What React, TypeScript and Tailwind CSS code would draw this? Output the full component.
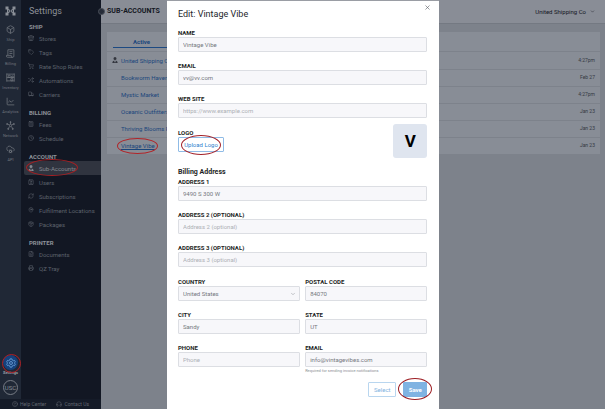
import type { ReactNode } from "react";
import {
  LuBox,
  LuCalculator,
  LuChartLine,
  LuChevronDown,
  LuCircleHelp,
  LuClock,
  LuCloudCog,
  LuContact,
  LuFileText,
  LuHeadphones,
  LuMapPin,
  LuPackage,
  LuPrinter,
  LuRefreshCw,
  LuShoppingCart,
  LuShuffle,
  LuStore,
  LuTag,
  LuTruck,
  LuX,
} from "react-icons/lu";
import { FaUserTie } from "react-icons/fa6";

type IconProps = { size?: number; className?: string };
type IconComponent = (props: IconProps) => ReactNode;

function BillingIcon({ size = 9, className }: IconProps) {
  return (
    <svg viewBox="0 0 24 24" width={size} height={size} className={className} fill="none" stroke="currentColor" strokeWidth="2">
      <path d="M5 16V2h16v17a3 3 0 0 1-3 3H4a3 3 0 0 1-3-3v-2h13v2a3 3 0 0 0 4 3" />
      <path d="M9 7h8M9 12h8" />
    </svg>
  );
}

function InventoryIcon({ size = 9, className }: IconProps) {
  return (
    <svg viewBox="0 0 24 24" width={size} height={size} className={className} fill="none" stroke="currentColor" strokeWidth="2">
      <path d="M2 1v22M22 1v22M2 12h20M2 21h20M2 3h20" />
      <path d="M6 6h5v6H6zM13 15h5v6h-5zM15 8h4v4h-4z" />
    </svg>
  );
}

function NetworkIcon({ size = 9, className }: IconProps) {
  return (
    <svg viewBox="0 0 24 24" width={size} height={size} className={className} fill="none" stroke="currentColor" strokeWidth="2">
      <circle cx="12" cy="12" r="3" />
      <path d="M12 9V4M9.5 10.5L4 8M14.5 10.5L20 8M10 14.5L6 20M14 14.5L18 20" />
      <g fill="currentColor">
        <circle cx="12" cy="3" r="1.5" />
        <circle cx="3" cy="8" r="1.5" />
        <circle cx="21" cy="8" r="1.5" />
        <circle cx="6" cy="21" r="1.5" />
        <circle cx="18" cy="21" r="1.5" />
      </g>
    </svg>
  );
}

function GearIcon({ size = 10, className }: IconProps) {
  return (
    <svg viewBox="0 0 24 24" width={size} height={size} className={className} fill="none" stroke="currentColor" strokeWidth="2" strokeLinejoin="round">
      <path d="M10 2h4l1 3 2.5 1.5 3-.7 2 3.500-2 2.200v1l2 2.200-2 3.500-3-.7L15 19l-1 3h-4l-1-3-2.500-1.500-3 .7-2-3.500 2-2.200v-1l-2-2.200 2-3.500 3 .7L9 5z" />
      <circle cx="12" cy="12" r="3.5" />
    </svg>
  );
}

const rail: { label: string; icon: IconComponent }[] = [
  { label: "Ship", icon: LuBox },
  { label: "Billing", icon: BillingIcon },
  { label: "Inventory", icon: InventoryIcon },
  { label: "Analytics", icon: LuChartLine },
  { label: "Network", icon: NetworkIcon },
  { label: "API", icon: LuCloudCog },
];

const sections: { title: string; items: { label: string; icon: IconComponent }[] }[] = [
  {
    title: "SHIP",
    items: [
      { label: "Stores", icon: LuStore },
      { label: "Tags", icon: LuTag },
      { label: "Rate Shop Rules", icon: LuShoppingCart },
      { label: "Automations", icon: LuShuffle },
      { label: "Carriers", icon: LuTruck },
    ],
  },
  {
    title: "BILLING",
    items: [
      { label: "Fees", icon: LuCalculator },
      { label: "Schedule", icon: LuClock },
    ],
  },
  {
    title: "ACCOUNT",
    items: [
      { label: "Sub-Accounts", icon: FaUserTie },
      { label: "Users", icon: LuContact },
      { label: "Subscriptions", icon: LuRefreshCw },
      { label: "Fulfillment Locations", icon: LuMapPin },
      { label: "Packages", icon: LuPackage },
    ],
  },
  {
    title: "PRINTER",
    items: [
      { label: "Documents", icon: LuFileText },
      { label: "QZ Tray", icon: LuPrinter },
    ],
  },
];

const accounts = [
  { name: "United Shipping Co", date: "4:27pm", owner: true },
  { name: "Bookworm Haven", date: "Feb 27" },
  { name: "Mystic Market", date: "4:27pm" },
  { name: "Oceanic Outfitters", date: "Jan 23" },
  { name: "Thriving Blooms F", date: "Jan 23" },
  { name: "Vintage Vibe", date: "Jan 23", marked: true },
];

const labelStyle = "block text-[6px] leading-[9px] font-bold text-[#1d1f24]";
const control =
  "block h-[15px] w-full rounded-[1px] border border-[#dcdee3] bg-[#f7f7fa] px-1 text-[6px] leading-[13px] text-[#75787e] placeholder:text-[#adb0b5] outline-none";

function Field({ id, label, value, placeholder }: { id: string; label: string; value?: string; placeholder?: string }) {
  return (
    <div className="min-w-0 flex-1">
      <label htmlFor={id} className={labelStyle}>
        {label}
      </label>
      <input id={id} defaultValue={value} placeholder={placeholder} className={control} />
    </div>
  );
}

/* Red ring around the thing to click */
function Ring({ className }: { className: string }) {
  return <span className={`pointer-events-none absolute rounded-[50%] border ${className}`} />;
}

function Logo() {
  return (
    <svg viewBox="0 0 22 20" className="h-[10px] w-[11px]" fill="#8b9098">
      <path d="M1 1h6v5l4 2.5L15 6V1h6v6h-3v6h3v6h-6v-5l-4-2.5L7 14v5H1v-6h3V7H1z" />
      <circle cx="11" cy="10" r="1.6" fill="#202836" />
      <path d="M6 8l2.5 2L6 12zM16 8l-2.5 2 2.5 2z" fill="#202836" />
    </svg>
  );
}

function Rail() {
  return (
    <nav aria-label="Main" className="flex w-[21px] shrink-0 flex-col items-center bg-[#202836] pt-1.5 pb-1">
      <Logo />
      <div className="mt-[9px] flex w-full flex-col gap-1.5">
        {rail.map(({ label, icon: Icon }) => (
          <a key={label} href="#" className="flex flex-col items-center gap-0.5 text-[#70757e]">
            <Icon size={9} />
            <span className="text-[4px] leading-[7px]">{label}</span>
          </a>
        ))}
      </div>
      <a href="#" className="relative mt-auto flex flex-col items-center text-[#9a9ea5]">
        <span className="flex size-[15px] items-center justify-center rounded-full bg-[#15417c] text-[#6fa3dc]">
          <GearIcon />
        </span>
        <span className="text-[4px] leading-[6px] font-bold">Settings</span>
        <Ring className="-top-px -left-px size-[19px] border-[#b01f24]" />
      </a>
      <button className="mt-1 flex size-[15px] items-center justify-center rounded-full border border-[#777c85] text-[6px] leading-none text-[#8b9098]">
        USC
      </button>
    </nav>
  );
}

function SettingsNav() {
  return (
    <div className="flex min-w-0 flex-1 flex-col">
      <h1 className="pt-[5px] pl-2 text-[9px] leading-[13px] text-[#8d9198]">Settings</h1>
      <div className="mt-1 flex flex-col gap-[7px]">
        {sections.map((section) => (
          <section key={section.title}>
            <h2 className="pl-2 text-[6px] leading-[9px] font-bold text-[#8d9198]">{section.title}</h2>
            {section.items.map(({ label, icon: Icon }) => {
              const active = label === "Sub-Accounts";
              return (
                <a
                  key={label}
                  href="#"
                  className={
                    active
                      ? "relative ml-[3px] flex h-[14px] items-center gap-[5px] rounded-l-xs bg-[#30343f] pl-1 text-[6px] whitespace-nowrap text-[#858992]"
                      : "flex h-[14px] items-center gap-[5px] pl-[7px] text-[6px] whitespace-nowrap text-[#5d626c]"
                  }
                >
                  <Icon size={6} className="shrink-0" />
                  {label}
                  {active && <Ring className="-top-0.5 left-0.5 h-[17px] w-[52px] border-[#a32024]" />}
                </a>
              );
            })}
          </section>
        ))}
      </div>
    </div>
  );
}

function Sidebar() {
  return (
    <aside className="flex w-[101px] shrink-0 flex-col bg-[#121723]">
      <div className="flex flex-1">
        <Rail />
        <SettingsNav />
      </div>
      <footer className="flex h-[10px] items-center justify-between bg-[#151b28] px-3 text-[5px] leading-[10px] whitespace-nowrap text-[#626771]">
        <a href="#" className="flex items-center gap-0.5">
          <LuCircleHelp size={6} />
          Help Center
        </a>
        <a href="#" className="flex items-center gap-0.5">
          <LuHeadphones size={6} />
          Contact Us
        </a>
      </footer>
    </aside>
  );
}

function AccountsPage() {
  return (
    <main className="min-w-0 flex-1 bg-[#7d828b]">
      <header className="flex h-6 items-center justify-between border-b border-[#747982] bg-[#898d96] pr-2.5 pl-1.5">
        <h2 className="relative text-[7px] font-bold text-[#14171f]">
          SUB-ACCOUNTS
          <button
            aria-label="Collapse menu"
            className="absolute top-0.5 -left-[9px] size-[7px] rounded-full border border-[#4a4f59] bg-[#262c38]"
          />
        </h2>
        <button className="flex items-center gap-1 text-[6px] text-[#14171f]">
          United Shipping Co
          <LuChevronDown size={5} />
        </button>
      </header>
      <div className="mt-2 mr-[5px] ml-1.5 bg-[#888d96]">
        <div className="flex h-5 items-start border-b border-[#7d828b] pl-1.5">
          <button className="h-4 w-[57px] border-b border-[#1d4a82] pt-1 text-[6px] font-bold text-[#1b467c]">Active</button>
        </div>
        <table className="w-full text-[6px]">
          <tbody>
            {accounts.map((a) => (
              <tr key={a.name} className="h-[17px] border-b border-[#7d828b]">
                <td className="w-3.5 p-0 pl-[5px] text-[#33363e]">{a.owner && <FaUserTie size={6} />}</td>
                <td className="p-0">
                  <a href="#" className={a.marked ? "relative text-[#1b467c] underline" : "text-[#1b467c]"}>
                    {a.name}
                    {a.marked && <Ring className="-top-1 -left-1 h-4 w-[41px] border-[#b02428]" />}
                  </a>
                </td>
                <td className="p-0 pr-[5px] text-right text-[5px] text-[#363a43]">{a.date}</td>
              </tr>
            ))}
          </tbody>
        </table>
      </div>
    </main>
  );
}

function Row({ children }: { children: ReactNode }) {
  return <div className="flex gap-[5px]">{children}</div>;
}

function EditDialog() {
  return (
    <div
      role="dialog"
      aria-labelledby="dialog-title"
      className="absolute inset-y-0 left-[167px] w-[45%] overflow-hidden border-t border-[#9a9da4] bg-white pr-3 pl-[11px]"
    >
      <button aria-label="Close" className="absolute top-[3px] right-2 text-[#55585f]">
        <LuX size={7} />
      </button>
      <h2 id="dialog-title" className="pt-[7px] text-[9px] leading-[12px] text-[#24262b]">
        Edit: Vintage Vibe
      </h2>

      <form className="mt-2 flex flex-col">
        <div className="flex flex-col gap-[9px]">
          <Field id="name" label="NAME" value="Vintage Vibe" />
          <Field id="email" label="EMAIL" value="vv@vv.com" />
          <Field id="site" label="WEB SITE" placeholder="https://www.example.com" />
        </div>

        <div className="mt-1.5 flex items-start justify-between">
          <div className="flex flex-col pt-1">
            <span className={labelStyle}>LOGO</span>
            <button type="button" className="relative h-[15px] w-[46px] rounded-[1px] border border-[#8fbbe6] text-[6px] text-[#2f7fce]">
              Upload Logo
              <Ring className="-top-[3px] left-0.5 h-5 w-10 border-[#a3222a]" />
            </button>
          </div>
          <div className="flex size-[34px] items-center justify-center rounded-[3px] bg-[#dfe5ef] text-[17px] leading-none font-bold text-black">
            V
          </div>
        </div>

        <h3 className="mt-2.5 text-[7px] leading-[9px] font-bold text-[#1d1f24]">Billing Address</h3>
        <div className="flex flex-col gap-[9px]">
          <Field id="address1" label="ADDRESS 1" value="9490 S 300 W" />
          <Field id="address2" label="ADDRESS 2 (OPTIONAL)" placeholder="Address 2 (optional)" />
          <Field id="address3" label="ADDRESS 3 (OPTIONAL)" placeholder="Address 3 (optional)" />
        </div>
        <div className="mt-2.5 flex flex-col gap-[9px]">
          <Row>
            <div className="min-w-0 flex-1">
              <label htmlFor="country" className={labelStyle}>
                COUNTRY
              </label>
              <div className="relative">
                <select id="country" className={`${control} appearance-none`}>
                  <option>United States</option>
                </select>
                <LuChevronDown size={6} className="pointer-events-none absolute top-[5px] right-1 text-[#8b8e94]" />
              </div>
            </div>
            <Field id="postal" label="POSTAL CODE" value="84070" />
          </Row>
          <Row>
            <Field id="city" label="CITY" value="Sandy" />
            <Field id="state" label="STATE" value="UT" />
          </Row>
          <Row>
            <Field id="phone" label="PHONE" placeholder="Phone" />
            <div className="min-w-0 flex-1">
              <Field id="billing-email" label="EMAIL" value="info@vintagevibes.com" />
              <p className="text-[4px] leading-[7px] whitespace-nowrap text-[#8b8e94]">Required for sending invoice notifications</p>
            </div>
          </Row>
        </div>

        <div className="mt-2 flex justify-end gap-[7px]">
          <button type="button" className="h-[15px] w-7 rounded-[1px] border border-[#b9d6ef] text-[6px] text-[#7fb2e0]">
            Select
          </button>
          <button type="submit" className="relative h-[15px] w-6 rounded-[1px] bg-[#7fb3e2] text-[6px] font-bold text-white">
            Save
            <Ring className="-top-1 -left-[5px] h-[22px] w-[34px] border-[#9c1c22]" />
          </button>
        </div>
      </form>
    </div>
  );
}

export default function App() {
  return (
    <div className="relative flex min-h-screen overflow-hidden font-['Roboto',sans-serif]">
      <Sidebar />
      <AccountsPage />
      <EditDialog />
    </div>
  );
}
